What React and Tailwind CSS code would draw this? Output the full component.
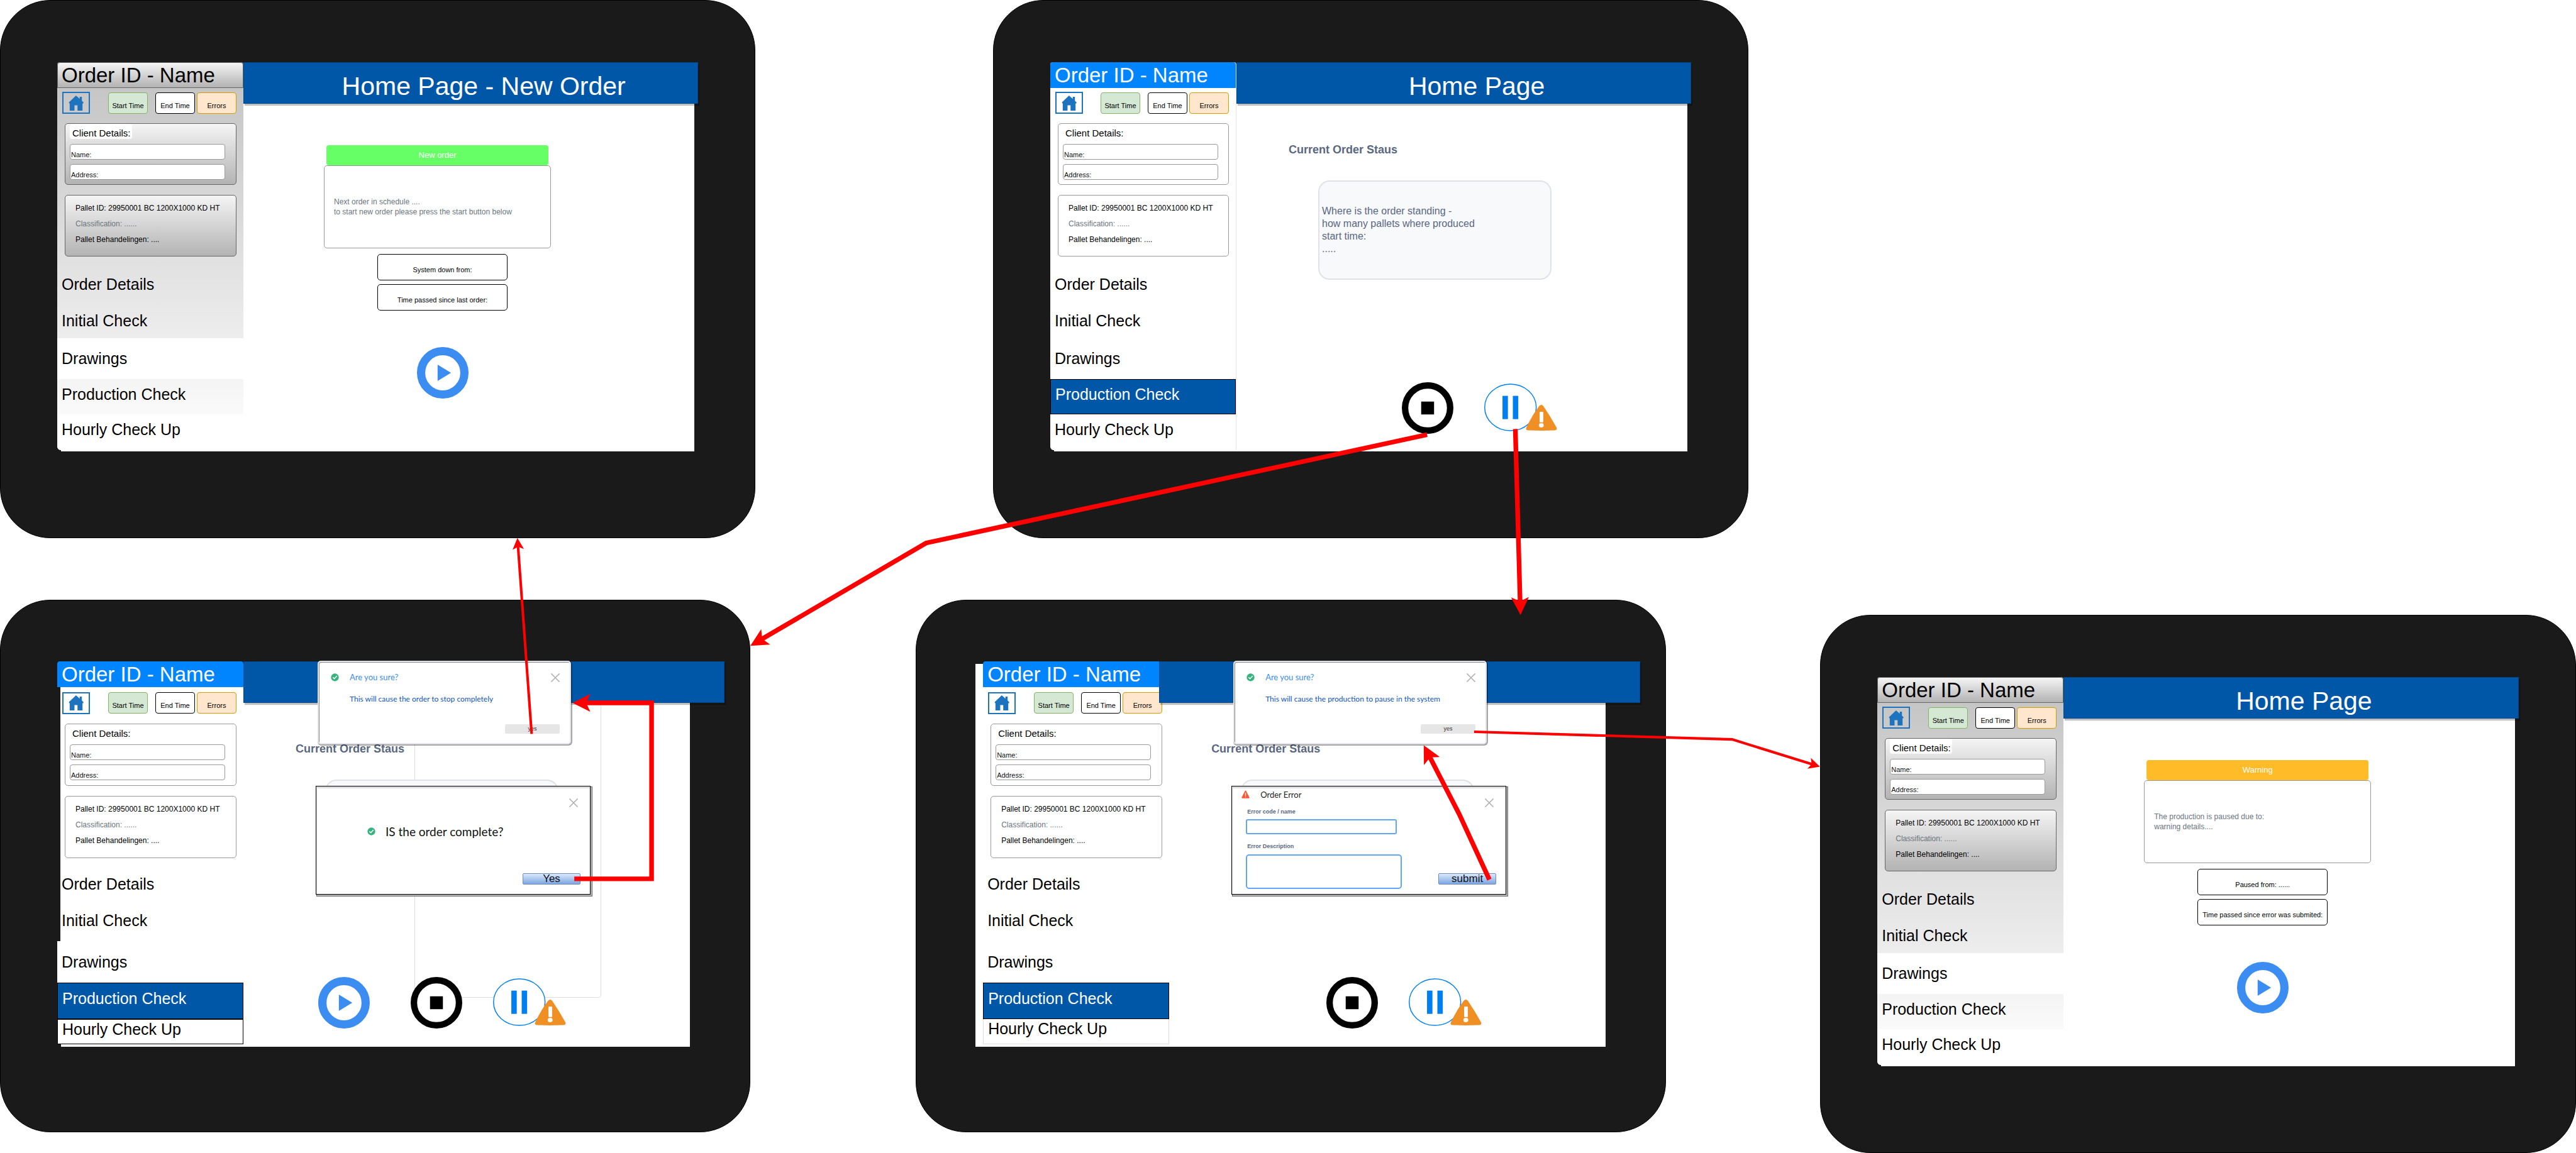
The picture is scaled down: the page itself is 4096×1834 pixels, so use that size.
import React, { useId } from "react";
import { clsx } from "clsx";

/* ---------- icons ---------- */

function HomeIcon() {
  return (
    <svg viewBox="0 0 29 29" className="h-6 w-6" fill="#1e73be" aria-hidden="true">
      <path d="M14.3 0 L0.4 13.4 L1.8 15 H2.2 V29 H11.4 V18.6 H17.2 V29 H26.8 V15 H28.2 L28.8 13.2 L25.6 10 V2.4 H21.4 V6.2 Z" />
    </svg>
  );
}

function PlayIcon() {
  return (
    <svg viewBox="0 0 100 100" className="h-[82px] w-[82px]" aria-hidden="true">
      <circle cx="50" cy="50" r="42" fill="#fff" stroke="#3b8df1" strokeWidth="16" />
      <path d="M40 34 V66 L66 50 Z" fill="#3b8df1" />
    </svg>
  );
}

function StopIcon() {
  return (
    <svg viewBox="0 0 100 100" className="h-[82px] w-[82px]" aria-hidden="true">
      <circle cx="50" cy="50" r="43.75" fill="#fff" stroke="#000" strokeWidth="12.5" />
      <rect x="37.5" y="37.5" width="25" height="25" fill="#000" />
    </svg>
  );
}

function PauseIcon() {
  return (
    <svg viewBox="0 0 141 92" className="h-[76px] w-[116px]" aria-hidden="true">
      <ellipse cx="50.7" cy="46" rx="49.8" ry="45" fill="#fff" stroke="#0080f0" strokeWidth="1.8" />
      <rect x="35.3" y="23.7" width="10.5" height="45" fill="#0080f0" />
      <rect x="55.3" y="23.7" width="10.5" height="45" fill="#0080f0" />
      <path
        d="M106 43.5 Q110.400 38.500 114.400 43.500 Q127 62 139.600 84.500 Q141.600 90.200 136 90.500 Q110.500 91.600 85 90.500 Q79 90 81.600 84.500 Q93 61 106 43.500 Z"
        fill="#f09024"
      />
      <rect x="107" y="54.500" width="7.200" height="20.500" rx="1.400" fill="#fff" />
      <ellipse cx="110.300" cy="80.600" rx="4.700" ry="4.200" fill="#fff" />
    </svg>
  );
}

function CheckIcon() {
  return (
    <svg viewBox="0 0 16 16" className="h-[13px] w-[13px] shrink-0" aria-hidden="true">
      <circle cx="8" cy="8" r="7.600" fill="#36b37e" />
      <path d="M4.600 8.200 L7 10.600 L11.600 5.600" fill="none" stroke="#fff" strokeWidth="1.800" strokeLinecap="round" strokeLinejoin="round" />
    </svg>
  );
}

function ErrorIcon() {
  return (
    <svg viewBox="0 0 16 16" className="h-[13px] w-[13px] shrink-0" aria-hidden="true">
      <path d="M8 0.600 Q8.800 0.600 9.200 1.400 L15.600 14.200 Q15.900 15.600 14.600 15.600 H1.400 Q0.100 15.600 0.400 14.200 L6.800 1.400 Q7.200 0.600 8 0.600 Z" fill="#ff5630" />
      <path d="M8 5.400 V10.200" stroke="#fff" strokeWidth="1.700" strokeLinecap="round" />
      <circle cx="8" cy="12.900" r="1" fill="#fff" />
    </svg>
  );
}

function CloseIcon() {
  return (
    <svg viewBox="0 0 16 16" className="h-[14px] w-[14px]" aria-hidden="true">
      <path d="M1 1 L15 15 M15 1 L1 15" stroke="#b3b3b3" strokeWidth="1.700" strokeLinecap="round" />
    </svg>
  );
}

/* ---------- sidebar ---------- */

function Chip({ className, children }) {
  return (
    <button type="button" className={clsx("h-[34px] w-[63px] rounded-[4px] border pt-[9px] text-[11px] leading-[13px] text-black", className)}>
      {children}
    </button>
  );
}

function Field({ label }) {
  const id = useId();
  return (
    <div className="flex h-[25px] w-[247px] items-end rounded-[4px] border border-[#999] bg-white pl-px">
      <label htmlFor={id} className="text-[11px] leading-[13px] text-[#111]">{label}</label>
      <input id={id} className="h-full min-w-0 flex-1 bg-transparent px-1 text-[11px] outline-none" />
    </div>
  );
}

function Panel({ gray, tall, className, children }) {
  return (
    <section
      className={clsx(
        "mr-[11px] ml-3 rounded-[5px] border",
        tall ? "h-[99px]" : "h-[98px]",
        gray ? "border-[#666] bg-linear-to-b from-[#f5f5f5] to-[#b3b3b3]" : "border-[#999] bg-white",
        className
      )}
    >
      {children}
    </section>
  );
}

function NavItem({ className, children }) {
  return (
    <button type="button" className={clsx("flex w-full items-center pl-[7px] text-left text-[25px] leading-[28px]", className)}>
      {children}
    </button>
  );
}

function Sidebar({ gray, compact, shifted }) {
  const body = compact && !shifted;
  return (
    <aside
      className={clsx(
        "relative z-10 flex w-[296px] flex-col text-black",
        gray && "rounded-t-[4px] rounded-bl-[6px] bg-linear-to-b from-[#c2c2c2] to-white",
        !gray && !compact && "rounded-t-[4px] rounded-bl-[6px] border-r border-[#e4e4e4] bg-white"
      )}
    >
      <h2
        className={clsx(
          "h-[41px] rounded-t-[4px] text-[33px]",
          gray
            ? "border border-[#666] bg-linear-to-b from-[#f5f5f5] to-[#b3b3b3] pl-[6px] leading-[39px]"
            : "bg-[#0085ff] pl-[7px] leading-[41px] text-white"
        )}
      >
        Order ID - Name
      </h2>
      <div className={clsx(body && "ml-[5px] bg-white")}>
        <div className={clsx(body && "-ml-[5px]")}>
          <div className={clsx("flex items-center pr-[11px] pl-2", compact ? "pt-2" : "pt-[6px]")}>
            <button
              type="button"
              aria-label="Home"
              className="flex h-[35px] w-[44px] items-center justify-center border-2 border-[#1e73be]"
            >
              <HomeIcon />
            </button>
            <div className="ml-auto flex">
              <Chip className="border-[#82b366] bg-[#d5e8d4]">Start Time</Chip>
              <Chip className="ml-3 border-black bg-white">End Time</Chip>
              <Chip className="ml-[3px] border-[#d79b00] bg-[#ffe6cc]">Errors</Chip>
            </div>
          </div>
          <Panel gray={gray} tall={compact} className="mt-[15px] pl-[7px]">
            <h3 className="h-6 w-[99px] rounded-[4px] bg-white pt-[6px] pl-1 text-[15px] leading-[18px]">Client Details:</h3>
            <div className="mt-2 flex flex-col gap-[7px]">
              <Field label="Name:" />
              <Field label="Address:" />
            </div>
          </Panel>
          <Panel gray={gray} tall={compact} className="mt-4 flex flex-col gap-[9px] pt-[12px] pl-4 text-[12px] leading-4">
            <p>Pallet ID: 29950001 BC 1200X1000 KD HT</p>
            <p className="text-[#6c757d]">Classification: ......</p>
            <p>Pallet Behandelingen: ....</p>
          </Panel>
          <NavItem className={clsx("h-[58px]", compact ? "mt-3" : "mt-[15px]")}>Order Details</NavItem>
          <NavItem className={compact ? "h-[62px] pb-1" : "h-[57px]"}>Initial Check</NavItem>
        </div>
      </div>
      <NavItem className={clsx("bg-white", compact ? "h-[66px]" : "h-[65px] pb-px")}>Drawings</NavItem>
      <NavItem
        className={clsx(
          "pb-2",
          compact ? "h-[58px]" : "h-[56px]",
          gray ? "bg-linear-to-b from-[#f4f4f4] to-[#fafafa]" : "border border-black bg-[#0057a8] pl-[6px] text-white"
        )}
      >
        Production Check
      </NavItem>
      <NavItem
        className={clsx(
          "bg-white",
          compact ? "h-[40px] pb-2" : "h-[57px] rounded-bl-[6px] pb-[10px]",
          compact && (shifted ? "border border-t-0 border-[#ddd]" : "border border-black")
        )}
      >
        Hourly Check Up
      </NavItem>
    </aside>
  );
}

/* ---------- tablet shell ---------- */

function Tablet({ className, title, gray, compact, shifted, children, overlay }) {
  return (
    <article
      className={clsx(
        "absolute flex rounded-[80px] border border-black bg-[#1a1a1a]",
        compact ? "w-[29.13%] pt-[97px] pr-[40px] pb-[135px]" : "w-[29.33%] pt-[98px] pr-[90px] pb-[137px]",
        shifted ? "pl-[94px]" : "pl-[90px]",
        className
      )}
    >
      {shifted ? (
        <div className="flex w-[292px] shrink-0 flex-col pt-1">
          <div className="flex-1 bg-white pl-3">
            <div className="-mt-1">
              <Sidebar compact shifted />
            </div>
          </div>
        </div>
      ) : (
        <div className="flex w-[296px] shrink-0 flex-col">
          <Sidebar gray={gray} compact={compact} />
          <div className="ml-[6px] min-h-[2px] flex-1 bg-white" />
        </div>
      )}
      <main className="flex min-w-0 flex-1 flex-col">
        <header className="relative z-20 h-[66px] border border-[#00488c] bg-[#0057a8] pt-[13px] pl-[41px] text-center text-[41px] leading-[48px] text-white shadow-[2px_3px_1px_rgba(0,0,0,0.25)]">
          <h1>{title}</h1>
        </header>
        <div className={clsx("relative flex flex-1 flex-col bg-white", compact ? "mr-[55px] min-h-[547px]" : "mr-[6px] min-h-[553px]")}>
          {children}
        </div>
      </main>
      {overlay}
    </article>
  );
}

/* ---------- main area contents ---------- */

function Stat({ children }) {
  return (
    <div className="flex h-[42px] items-center justify-center rounded-[5px] border border-black pt-[9px] text-[11px] leading-[13px]">
      {children}
    </div>
  );
}

function Notice({ heading, tone, lines, stats }) {
  return (
    <>
      <section className="mt-[66px] ml-[128px] w-[361px]">
        <h2 className={clsx("mx-[4px] h-[32px] rounded-[4px] text-center text-[13px] leading-[32px] text-white", tone)}>{heading}</h2>
        <div className="flex h-[132px] flex-col justify-center rounded-[5px] border border-[#999] pl-[15px] text-[12px] leading-[16px] text-[#6c757d]">
          {lines.map((line) => (
            <p key={line}>{line}</p>
          ))}
        </div>
      </section>
      <div className="mt-[9px] ml-[213px] flex w-[207px] flex-col gap-[6px]">
        {stats.map((stat) => (
          <Stat key={stat}>{stat}</Stat>
        ))}
      </div>
      <button type="button" aria-label="Start" className="mt-[58px] ml-[276px] w-[82px]">
        <PlayIcon />
      </button>
    </>
  );
}

function Status({ children, cardLines }) {
  return (
    <>
      <h2 className="mt-[63px] ml-[83px] text-[18px] leading-5 font-bold text-[#596780]">Current Order Staus</h2>
      <section className="relative mt-[39px] ml-[130px] flex h-[158px] w-[371px] flex-col justify-center rounded-[18px] border-2 border-[#dfe2e8] bg-[#f7f9fb] pl-1 text-[16px] leading-5 text-[#596780]">
        {cardLines?.map((line) => (
          <p key={line}>{line}</p>
        ))}
      </section>
      {children}
    </>
  );
}

function Controls({ play, className }) {
  return (
    <div className={clsx("relative flex items-start", className)}>
      {play && (
        <button type="button" aria-label="Play" className="mr-[65px]">
          <PlayIcon />
        </button>
      )}
      <button type="button" aria-label="Stop">
        <StopIcon />
      </button>
      <button type="button" aria-label="Pause" className="mt-[2px] ml-[49px]">
        <PauseIcon />
      </button>
    </div>
  );
}

/* ---------- dialogs ---------- */

function ConfirmDialog({ message }) {
  return (
    <div
      role="dialog"
      aria-label="Are you sure?"
      className="absolute top-[96px] left-[504px] z-30 flex h-[133px] w-[403px] flex-col rounded-[5px] border-2 border-[#e3e4e9] bg-white px-[19px] pt-[15px] pb-[15px] font-['Lato',sans-serif] shadow-[1px_1px_0_1px_rgba(0,0,0,0.35),inset_1px_1px_0_0_#8a8a8a]"
    >
      <div className="flex items-start">
        <span className="pt-[3px]"><CheckIcon /></span>
        <h3 className="ml-[17px] text-[13px] leading-[18px] text-[#3b8df1]">Are you sure?</h3>
        <button type="button" aria-label="Close" className="mt-[3px] -mr-[3px] ml-auto">
          <CloseIcon />
        </button>
      </div>
      <p className="mt-[17px] ml-[30px] text-[12px] leading-[18px] text-[#1155bb]">{message}</p>
      <button type="button" className="mt-auto -mr-[3px] ml-auto h-[15px] w-[87px] rounded-[2px] bg-[#e6e6e6] font-['Liberation_Sans',Arial,sans-serif] text-[9px] leading-[14px] text-[#333]">
        yes
      </button>
    </div>
  );
}

function TaskDialog({ label, action, children }) {
  return (
    <div
      role="dialog"
      aria-label={label}
      className="absolute top-[295px] left-[501px] z-30 flex h-[173px] w-[437px] flex-col border border-black bg-white shadow-[2px_2px_0_0_#b5b5b5,2px_2px_0_1px_#6a6a6a,inset_1px_3px_0_0_#dcdcdc]"
    >
      {children}
      <button type="button" aria-label="Close" className="absolute top-[19px] right-[19px]">
        <CloseIcon />
      </button>
      <button
        type="button"
        className="absolute right-[15px] bottom-[15px] h-[18px] w-[92px] rounded-[2px] border border-[#6c8ebf] bg-linear-to-b from-[#dae8fc] to-[#7ea6e0] text-[17px] leading-4 text-[#111]"
      >
        {action}
      </button>
    </div>
  );
}

function ErrorForm() {
  const codeId = useId();
  const descriptionId = useId();
  return (
    <form className="flex flex-col pl-[22px]">
      <div className="-ml-[7px] flex items-center gap-[17px] pt-1">
        <ErrorIcon />
        <h3 className="font-['Lato',sans-serif] text-[13px] leading-[18px] text-[#222]">Order Error</h3>
      </div>
      <label htmlFor={codeId} className="mt-[12px] ml-[2px] text-[9px] leading-3 font-bold text-[#596780]">Error code / name</label>
      <input id={codeId} className="mt-[6px] h-6 w-[240px] rounded-[3px] border-2 border-[#5fa5f8] bg-white px-1 text-[11px] outline-none" />
      <label htmlFor={descriptionId} className="mt-[13px] ml-[2px] text-[9px] leading-3 font-bold text-[#596780]">Error Description</label>
      <textarea id={descriptionId} className="mt-[7px] h-[55px] w-[248px] resize-none rounded-[5px] border-2 border-[#5fa5f8] bg-white px-1 text-[11px] outline-none" />
    </form>
  );
}

/* ---------- flow arrows ---------- */

const ARROWS = [
  { points: [[2760, 841], [1791, 1050.7], [1451, 1249.7]], width: 9, head: 34.5 },
  { points: [[2930.7, 830], [2940.7, 1190]], width: 9, head: 34.5 },
  { points: [[1110.5, 1700.5], [1260, 1700.5], [1260, 1360], [1107, 1360]], width: 9, head: 34.5 },
  { points: [[2880.5, 1702], [2822, 1575], [2753.5, 1442]], width: 9, head: 34.5 },
  { points: [[1028, 1420], [1000.5, 1041]], width: 5, head: 22 },
  { points: [[2851, 1416], [3350, 1430.7], [3520, 1483.5]], width: 5, head: 22 },
];

function Arrow({ points, width, head }) {
  const [tx, ty] = points[points.length - 1];
  const [px, py] = points[points.length - 2];
  const length = Math.hypot(tx - px, ty - py);
  const ux = (px - tx) / length;
  const uy = (py - ty) / length;
  const half = head / 2;
  const at = (back, side) => [tx + ux * back - uy * side, ty + uy * back + ux * side];
  const line = [...points.slice(0, -1), at(head * 0.7, 0)];
  return (
    <g>
      <polyline points={line.map((p) => p.join(",")).join(" ")} fill="none" stroke="#f00" strokeWidth={width} strokeLinejoin="miter" />
      <polygon points={[[tx, ty], at(head, half), at(head * 0.77, 0), at(head, -half)].map((p) => p.join(",")).join(" ")} fill="#f00" />
    </g>
  );
}

/* ---------- page ---------- */

export default function App() {
  return (
    <div className="relative aspect-[4096/1834] w-full overflow-hidden bg-white font-['Liberation_Sans',Arial,sans-serif]">
      <Tablet className="top-0 left-0" title="Home Page - New Order" gray>
        <Notice
          heading="New order"
          tone="bg-[#66ff66]"
          lines={["Next order in schedule ....", "to start new order please press the start button below"]}
          stats={["System down from:", "Time passed since last order:"]}
        />
      </Tablet>

      <Tablet className="top-0 left-[38.55%]" title="Home Page">
        <Status cardLines={["Where is the order standing -", "how many pallets where produced", "start time:", "....."]}>
          <Controls className="mt-[163px] ml-[263px]" />
        </Status>
      </Tablet>

      <Tablet
        className="top-[52%] left-0"
        compact
        overlay={
          <>
            <ConfirmDialog message="This will cause the order to stop completely" />
            <TaskDialog label="Order complete" action="Yes">
              <div className="flex items-center gap-4 pt-[60px] pl-[81px]">
                <CheckIcon />
                <h3 className="font-['Lato',sans-serif] text-[19px] leading-6 text-[#111]">IS the order complete?</h3>
              </div>
            </TaskDialog>
          </>
        }
      >
        <div className="absolute top-0 left-[272px] h-[469px] w-[297px] rounded-br-[5px] border border-t-0 border-[#ddd]" />
        <Status>
          <Controls play className="mt-[156px] ml-[119px]" />
        </Status>
      </Tablet>

      <Tablet
        className="top-[52%] left-[35.55%]"
        compact
        shifted
        overlay={
          <>
            <ConfirmDialog message="This will cause the production to pause in the system" />
            <TaskDialog label="Order Error" action="submit">
              <ErrorForm />
            </TaskDialog>
          </>
        }
      >
        <Status>
          <Controls className="mt-[156px] ml-[266px]" />
        </Status>
      </Tablet>

      <Tablet className="top-[53.33%] left-[70.66%]" title="Home Page" gray>
        <Notice
          heading="Warning"
          tone="bg-[#ffbb28]"
          lines={["The production is paused due to:", "warning details...."]}
          stats={["Paused from: ......", "Time passed since error was submited:"]}
        />
      </Tablet>

      <svg viewBox="0 0 4982 2231" className="pointer-events-none absolute inset-0 z-40 h-full w-full" aria-hidden="true">
        {ARROWS.map((arrow, i) => (
          <Arrow key={i} {...arrow} />
        ))}
      </svg>
    </div>
  );
}
